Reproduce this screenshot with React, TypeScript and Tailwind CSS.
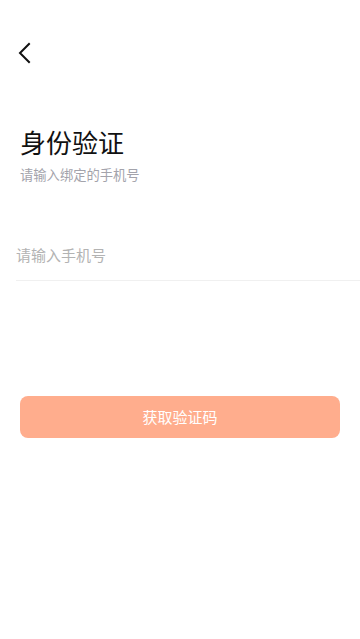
export default function App() {
  return (
    <div
      className="w-[360px] h-[639px] bg-white flex flex-col"
      style={{ fontFamily: '"Noto Sans CJK SC", "Noto Sans", sans-serif' }}
    >
      <div className="h-[104px] pt-[42px] pl-[17px]">
        <svg width="16" height="22" viewBox="0 0 16 22" fill="none">
          <path d="M12 2 L3 11 L12 20" stroke="#111" strokeWidth="2" strokeLinecap="square" />
        </svg>
      </div>

      <div className="px-5 pt-[20px]">
        <h1 className="text-[26px] leading-[36px] text-[#111]">身份验证</h1>
        <p className="mt-[6px] text-[13.3px] leading-[18px] text-[#a3a3ab]">请输入绑定的手机号</p>
      </div>

      <div className="ml-4 mt-[49px] h-[48px] pb-[3px] flex items-center border-b border-[#f0f0f0]">
        <input
          className="w-full text-[15px] outline-none placeholder:text-[#b3b3b3] bg-transparent"
          placeholder="请输入手机号"
        />
      </div>

      <div className="px-5 mt-[115px]">
        <button className="w-full h-[42px] rounded-lg bg-[#ffad8d] text-white text-[15px]">
          获取验证码
        </button>
      </div>
    </div>
  );
}
